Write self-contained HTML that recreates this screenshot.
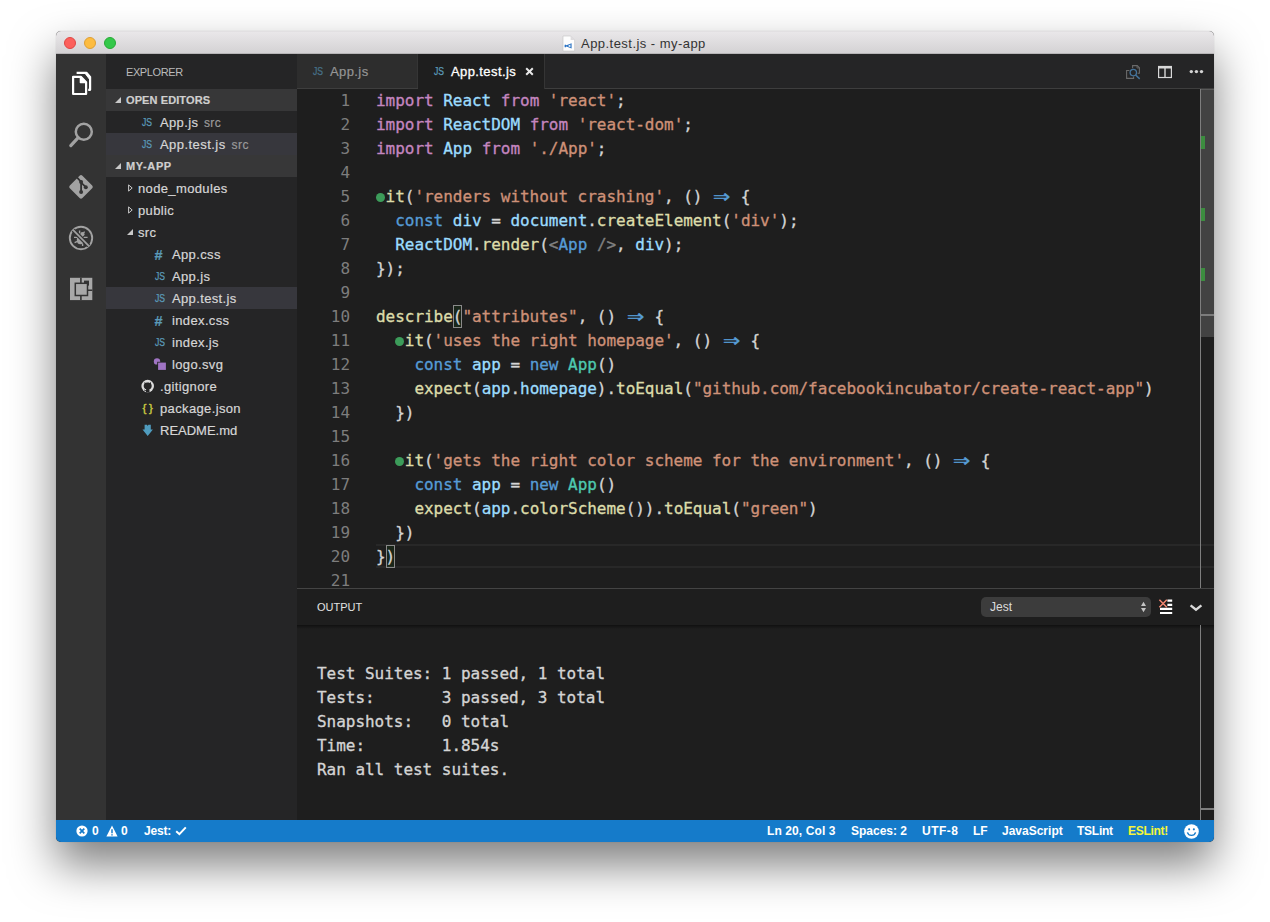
<!DOCTYPE html>
<html lang="en">
<head>
<meta charset="utf-8">
<title>App.test.js - my-app</title>
<style>
*{box-sizing:border-box;margin:0;padding:0}
html,body{width:1270px;height:922px;overflow:hidden;background:#fff}
body{font-family:"Liberation Sans",sans-serif;position:relative;-webkit-font-smoothing:antialiased}
.abs{position:absolute}
#win{position:absolute;left:56px;top:31px;width:1158px;height:811px;border-radius:5px;background:#1e1e1e;
  box-shadow:0 23px 45px rgba(0,0,0,.50),0 0 1px rgba(0,0,0,.3);}
#clip{position:absolute;inset:0;border-radius:5px;overflow:hidden}
#title{position:absolute;left:0;top:0;width:1158px;height:23px;background:linear-gradient(#e9e7e9,#d4d2d4);border-bottom:1px solid #b7b5b7;
  border-top:1px solid #e2e0e2}
.tl{position:absolute;top:5px;width:12px;height:12px;border-radius:50%}
#ttext{position:absolute;left:525px;top:4px;font-size:13px;color:#333333;line-height:15px;letter-spacing:.46px;white-space:nowrap}
#act{position:absolute;left:0;top:23px;width:50px;height:766px;background:#333333}
#side{position:absolute;left:50px;top:23px;width:191px;height:766px;background:#252526;color:#d6d6d6;font-size:13px}
#ed{position:absolute;left:241px;top:23px;width:917px;height:766px;background:#1e1e1e}
#status{position:absolute;left:0;top:789px;width:1158px;height:22px;background:#157bca;color:#fff;font-size:12px;font-weight:bold}
/* sidebar */
.row{position:absolute;left:0;width:191px;height:22px;line-height:22px;white-space:nowrap}
.hdr{background:#373738;font-weight:bold;font-size:11px;color:#cfcfcf}
.row.hdr .t{top:0;letter-spacing:.1px}
.sel{background:#37373d}
.row .t{position:absolute;top:1px;letter-spacing:.36px;-webkit-text-stroke:.2px}
.dim{color:#9a9a9a;font-size:12px;margin-left:-2px}
.ic{position:absolute}
.row .js{font-size:10px;color:#5b9ab8;letter-spacing:-.2px;transform:scaleX(.86);transform-origin:0 50%;top:1px;-webkit-text-stroke:.25px #5b9ab8}
.row .hash{font-size:14.5px;font-weight:bold;color:#5b9ab8;letter-spacing:0;top:1px}
.tw{position:absolute;width:0;height:0}
.tri-r{width:5px;height:8px}
/* editor */
.mono{font-family:"DejaVu Sans Mono","Liberation Mono",monospace;font-size:16px;-webkit-text-stroke:.32px;letter-spacing:-.033px}
.ln{position:absolute;left:0;width:53px;height:24px;line-height:24px;text-align:right;color:#7d7d7d;white-space:pre;-webkit-text-stroke:0}
.cl{position:absolute;left:79px;height:24px;line-height:24px;color:#d4d4d4;white-space:pre}
.k{color:#c586c0}.v{color:#9cdcfe}.s{color:#ce9178}.b{color:#569cd6}.f{color:#dcdcaa}.c{color:#4ec9b0}.g{color:#808080}
.dot{display:inline-block;width:9.6px;position:relative}
.dot i{position:absolute;left:0;top:-9.5px;width:9px;height:9px;border-radius:50%;background:#3c9c5a}
.ar{display:inline-block;width:19.2px;text-align:center;transform:scale(1.75,1.35);transform-origin:50% 56%}

#tabs{position:absolute;left:0;top:0;width:917px;height:35px;background:#252526;border-bottom:1px solid #3e3e3e}
.tab{position:absolute;top:0;height:34px;font-size:13px;line-height:35px;white-space:nowrap;letter-spacing:.4px}
.tjs{font-size:10px;color:#5b9ab8;letter-spacing:-.2px;transform:scaleX(.86);transform-origin:0 50%;-webkit-text-stroke:.25px}
#code{position:absolute;left:0;top:0;width:917px;height:534px;overflow:hidden}
#ruler{position:absolute;left:903px;top:35px;width:14px;height:499px}
.gm{left:1px;width:4px;height:13px;background:#3c8c3f}
.bm{outline:1px solid #8a8a8a;outline-offset:-1px;padding:2px 0 2px;background:rgba(0,100,0,.12)}
#panel{position:absolute;left:0;top:534px;width:917px;height:232px;background:#1e1e1e;border-top:1px solid #444444}
.st{top:0;line-height:22px;white-space:nowrap}
</style>
</head>
<body>
<div id="win"><div id="clip">
  <div id="title">
    <div class="tl" style="left:8px;background:#fc605c;border:.5px solid #df4744"></div>
    <div class="tl" style="left:28px;background:#fdbc40;border:.5px solid #de9f34"></div>
    <div class="tl" style="left:48px;background:#34c84a;border:.5px solid #27aa35"></div>
    <svg class="abs" style="left:506px;top:3px" width="14" height="17" viewBox="0 0 14 17"><path d="M1 1H8.6L12.6 5V16H1Z" fill="#fdfdfd" stroke="#c4c2c4" stroke-width=".6"/><path d="M8.6 1V5H12.6Z" fill="#dedcde"/><path d="M9.6 8.2V13.6L4.4 11.6L3.2 12.4L2.6 11.9V9.9L3.2 9.4L4.4 10.2ZM8.4 9.6L6 10.9L8.4 12.2Z" fill="#2a73c4" fill-rule="evenodd"/></svg>
    <div id="ttext">App.test.js - my-app</div>
  </div>
  <div id="act">
    <svg class="abs" style="left:0;top:0" width="50" height="300" viewBox="0 0 50 300" fill="none">
      <!-- explorer -->
      <g stroke="#ffffff" stroke-width="2.2" stroke-linejoin="round" stroke-linecap="butt">
        <path d="M17.1 22.8H24.8L30.1 28.2V40H17.1Z"/>
        <path d="M24.4 22.8V28.6H30.1Z" stroke-width="1.4" fill="#ffffff"/>
        <path d="M20.6 18.8H30.4L34.1 22.9V35.8H32.2"/>
        <path d="M30 18.8L34.1 23.2V26L28.6 18.8Z" stroke-width="1" fill="#ffffff"/>
      </g>
      <!-- search -->
      <g stroke="#a2a2a2">
        <circle cx="27.8" cy="77.7" r="8" stroke-width="2.5"/>
        <path d="M22.2 83.6L14.8 91.6" stroke-width="3.2" stroke-linecap="round"/>
      </g>
      <!-- git -->
      <g>
        <rect x="16.1" y="123.9" width="17.8" height="17.8" rx="2" transform="rotate(45 25 132.8)" fill="#a2a2a2"/>
        <g stroke="#333333" stroke-width="1.8" stroke-linecap="round">
          <path d="M21.4 123.9L25.1 127.8V137.9M25.1 128.6L29.8 133.2"/>
        </g>
        <circle cx="25.1" cy="127.9" r="2" fill="#333333"/>
        <circle cx="29.8" cy="133.3" r="2" fill="#333333"/>
        <circle cx="25.1" cy="138" r="2" fill="#333333"/>
      </g>
      <!-- debug -->
      <g stroke="#a2a2a2" stroke-width="1.6">
        <circle cx="25" cy="184" r="11.2" stroke-width="1.9"/>
        <ellipse cx="24.4" cy="185.8" rx="3.6" ry="4.5" fill="#a2a2a2" stroke="none"/>
        <circle cx="26.4" cy="180.2" r="2.1" fill="#a2a2a2" stroke="none"/>
        <path d="M18 183.4H21.4M18.6 188.6L21.4 187.4M28 183.4H31.6M27.6 187.6L31 189.2M26.6 189.4V192M23.6 176.6V179.6M28.6 177.6L27 179.6" stroke-width="1.4"/>
        <path d="M17.2 176.2L32.8 191.8" stroke="#333333" stroke-width="4.2"/>
        <path d="M17.2 176.2L32.8 191.8" stroke-width="1.7"/>
      </g>
      <!-- extensions -->
      <g>
        <rect x="14" y="223.8" width="22.3" height="22.3" fill="#a8a8a8"/>
        <path d="M24.9 223.8V246.1M24.9 236.2H36.3" stroke="#333333" stroke-width="1.6"/>
        <rect x="28" y="226.6" width="5" height="5" fill="#333333"/>
        <rect x="19.3" y="229.3" width="12.2" height="12.2" fill="#a8a8a8" stroke="#333333" stroke-width="1.5"/>
      </g>
    </svg>
  </div>
  <div id="side">
    <div class="abs" style="left:20px;top:11px;font-size:11px;line-height:14px;color:#bbbbbb;letter-spacing:-.4px">EXPLORER</div>
    <div class="row hdr" style="top:35px"><span class="tw" style="left:9px;top:8px;border-left:6px solid transparent;border-bottom:6px solid #c8c8c8"></span><span class="t" style="left:20px">OPEN EDITORS</span></div>
    <div class="row" style="top:57px"><span class="t js" style="left:36px">JS</span><span class="t" style="left:54px">App.js <span class="dim">&nbsp;src</span></span></div>
    <div class="row sel" style="top:79px"><span class="t js" style="left:36px">JS</span><span class="t" style="left:54px;letter-spacing:.45px">App.test.js <span class="dim">&nbsp;src</span></span></div>
    <div class="row hdr" style="top:101px"><span class="tw" style="left:9px;top:8px;border-left:6px solid transparent;border-bottom:6px solid #c8c8c8"></span><span class="t" style="left:20px;letter-spacing:.6px">MY-APP</span></div>
    <div class="row" style="top:123px"><svg class="tw tri-r" style="left:22px;top:7px" viewBox="0 0 5 8"><path d="M.6 .9L4.2 4L.6 7.1Z" fill="none" stroke="#c8c8c8" stroke-width="1"/></svg><span class="t" style="left:32px">node_modules</span></div>
    <div class="row" style="top:145px"><svg class="tw tri-r" style="left:22px;top:7px" viewBox="0 0 5 8"><path d="M.6 .9L4.2 4L.6 7.1Z" fill="none" stroke="#c8c8c8" stroke-width="1"/></svg><span class="t" style="left:32px">public</span></div>
    <div class="row" style="top:167px"><span class="tw" style="left:21px;top:8px;border-left:6px solid transparent;border-bottom:6px solid #c8c8c8"></span><span class="t" style="left:32px">src</span></div>
    <div class="row" style="top:189px"><span class="t hash" style="left:48.5px">#</span><span class="t" style="left:66px">App.css</span></div>
    <div class="row" style="top:211px"><span class="t js" style="left:49px">JS</span><span class="t" style="left:66px">App.js</span></div>
    <div class="row sel" style="top:233px"><span class="t js" style="left:49px">JS</span><span class="t" style="left:66px">App.test.js</span></div>
    <div class="row" style="top:255px"><span class="t hash" style="left:48.5px">#</span><span class="t" style="left:66px">index.css</span></div>
    <div class="row" style="top:277px"><span class="t js" style="left:49px">JS</span><span class="t" style="left:66px">index.js</span></div>
    <div class="row" style="top:299px"><svg class="abs" style="left:46px;top:4px" width="16" height="16" viewBox="0 0 16 16"><circle cx="5" cy="4.4" r="3.2" fill="#a074c4"/><rect x="5.2" y="4.8" width="9.6" height="9" fill="#252526"/><rect x="6.1" y="5.6" width="7.8" height="7.3" fill="#a074c4"/></svg><span class="t" style="left:66px">logo.svg</span></div>
    <div class="row" style="top:321px"><svg class="abs" style="left:34px;top:3px" width="16" height="16" viewBox="0 0 16 16"><circle cx="7.7" cy="8.1" r="6.3" fill="#dcdcdc"/><path d="M7.7 4.6C6.9 4.6 6.3 4.7 5.8 4.9L4.5 4.1L4.4 5.8C3.9 6.4 3.7 7.1 3.7 7.9C3.7 10 5.1 10.9 6.2 11.1L5.9 12.2C5.3 12.4 4.7 12.1 4.3 11.5L3.9 11.7C4.4 12.7 5.2 13.1 5.9 12.9V14.6H9.5V11.1C10.5 10.9 11.7 10 11.7 7.9C11.7 7.1 11.5 6.4 11 5.8L10.9 4.1L9.6 4.9C9.1 4.7 8.5 4.6 7.7 4.6Z" fill="#252526"/></svg><span class="t" style="left:54px">.gitignore</span></div>
    <div class="row" style="top:343px"><span class="abs" style="left:36.5px;top:0;font-size:11.5px;color:#cbcb41;letter-spacing:2.6px;-webkit-text-stroke:.4px #cbcb41">{}</span><span class="t" style="left:54px">package.json</span></div>
    <div class="row" style="top:365px"><svg class="abs" style="left:34px;top:4px" width="16" height="16" viewBox="0 0 16 16"><path d="M4.6 1.7H7L7.7 2.9L8.4 1.7H10.8V6.6H12.9L7.7 12.9L2.5 6.6H4.6Z" fill="#4f9cbe"/></svg><span class="t" style="left:54px;letter-spacing:0">README.md</span></div>
  </div>
  <div id="ed">
    <div id="tabs">
      <div class="tab" style="left:0;width:121px;background:#2d2d2d;border-right:1px solid #353535;color:#959595;-webkit-text-stroke:.2px"><span class="abs tjs" style="left:16px;color:#47728a">JS</span><span class="abs" style="left:33px">App.js</span></div>
      <div class="tab" style="left:121px;width:127px;background:#1e1e1e;height:35px;border-right:1px solid #353535;color:#ffffff;-webkit-text-stroke:.3px"><span class="abs tjs" style="left:16px">JS</span><span class="abs" style="left:33px">App.test.js</span>
        <svg class="abs" style="left:107px;top:13px" width="9" height="9" viewBox="0 0 9 9"><path d="M1.2 1.2L7.8 7.8M7.8 1.2L1.2 7.8" stroke="#e8e8e8" stroke-width="2"/></svg></div>
    <svg class="abs" style="left:826px;top:10px" width="84" height="16" viewBox="0 0 84 16" fill="none">
        <g stroke="#6a6a6a" stroke-width="1.1">
          <path d="M9.6 4.2V1.6H14.2L16.4 3.8V9.2H14.6"/>
          <path d="M14 1.6V4H16.4" stroke-width=".8"/>
          <path d="M6.4 6.5H3.6V14.4H10.6V12.6"/>
        </g>
        <circle cx="10.3" cy="8.6" r="3.2" stroke="#44739b" stroke-width="1.3"/>
        <path d="M12.6 11L16.7 14.9" stroke="#44739b" stroke-width="1.5"/>
        <rect x="35.6" y="2.5" width="12.8" height="11" stroke="#d8d8d8" stroke-width="1.2"/>
        <path d="M35 3.2H49" stroke="#d8d8d8" stroke-width="2.6"/>
        <path d="M42 3V13.5" stroke="#d8d8d8" stroke-width="1.4"/>
        <circle cx="68.3" cy="7.6" r="1.7" fill="#d4d4d4"/><circle cx="73.4" cy="7.6" r="1.7" fill="#d4d4d4"/><circle cx="78.5" cy="7.6" r="1.7" fill="#d4d4d4"/>
      </svg>
    </div>
    <div id="code">
      <div class="abs" style="left:79px;top:490px;width:838px;height:24px;border-top:2px solid #282828;border-bottom:2px solid #282828"></div>
      <div class="ln mono" style="top:35px">1</div><div class="cl mono" style="top:35px"><span class="k">import</span> <span class="v">React</span> <span class="k">from</span> <span class="s">'react'</span>;</div>
      <div class="ln mono" style="top:59px">2</div><div class="cl mono" style="top:59px"><span class="k">import</span> <span class="v">ReactDOM</span> <span class="k">from</span> <span class="s">'react-dom'</span>;</div>
      <div class="ln mono" style="top:83px">3</div><div class="cl mono" style="top:83px"><span class="k">import</span> <span class="v">App</span> <span class="k">from</span> <span class="s">'./App'</span>;</div>
      <div class="ln mono" style="top:107px">4</div><div class="cl mono" style="top:107px"></div>
      <div class="ln mono" style="top:131px">5</div><div class="cl mono" style="top:131px"><span class="dot"><i></i></span><span class="f">it</span>(<span class="s">'renders without crashing'</span>, () <span class="b ar">⇒</span> {</div>
      <div class="ln mono" style="top:155px">6</div><div class="cl mono" style="top:155px">  <span class="b">const</span> <span class="v">div</span> = <span class="v">document</span>.<span class="f">createElement</span>(<span class="s">'div'</span>);</div>
      <div class="ln mono" style="top:179px">7</div><div class="cl mono" style="top:179px">  <span class="v">ReactDOM</span>.<span class="f">render</span>(<span class="g">&lt;</span><span class="b">App</span> <span class="g">/&gt;</span>, <span class="v">div</span>);</div>
      <div class="ln mono" style="top:203px">8</div><div class="cl mono" style="top:203px">});</div>
      <div class="ln mono" style="top:227px">9</div><div class="cl mono" style="top:227px"></div>
      <div class="ln mono" style="top:251px">10</div><div class="cl mono" style="top:251px"><span class="f">describe</span><span class="bm">(</span><span class="s">"attributes"</span>, () <span class="b ar">⇒</span> {</div>
      <div class="ln mono" style="top:275px">11</div><div class="cl mono" style="top:275px">  <span class="dot"><i></i></span><span class="f">it</span>(<span class="s">'uses the right homepage'</span>, () <span class="b ar">⇒</span> {</div>
      <div class="ln mono" style="top:299px">12</div><div class="cl mono" style="top:299px">    <span class="b">const</span> <span class="v">app</span> = <span class="b">new</span> <span class="c">App</span>()</div>
      <div class="ln mono" style="top:323px">13</div><div class="cl mono" style="top:323px">    <span class="f">expect</span>(<span class="v">app</span>.<span class="v">homepage</span>).<span class="f">toEqual</span>(<span class="s">"github.com/facebookincubator/create-react-app"</span>)</div>
      <div class="ln mono" style="top:347px">14</div><div class="cl mono" style="top:347px">  })</div>
      <div class="ln mono" style="top:371px">15</div><div class="cl mono" style="top:371px"></div>
      <div class="ln mono" style="top:395px">16</div><div class="cl mono" style="top:395px">  <span class="dot"><i></i></span><span class="f">it</span>(<span class="s">'gets the right color scheme for the environment'</span>, () <span class="b ar">⇒</span> {</div>
      <div class="ln mono" style="top:419px">17</div><div class="cl mono" style="top:419px">    <span class="b">const</span> <span class="v">app</span> = <span class="b">new</span> <span class="c">App</span>()</div>
      <div class="ln mono" style="top:443px">18</div><div class="cl mono" style="top:443px">    <span class="f">expect</span>(<span class="v">app</span>.<span class="f">colorScheme</span>()).<span class="f">toEqual</span>(<span class="s">"green"</span>)</div>
      <div class="ln mono" style="top:467px">19</div><div class="cl mono" style="top:467px">  })</div>
      <div class="ln mono" style="top:491px">20</div><div class="cl mono" style="top:491px">}<span class="bm">)</span></div>
      <div class="ln mono" style="top:515px">21</div><div class="cl mono" style="top:515px"></div>
      <div id="ruler">
        <div class="abs" style="left:0;top:0;width:14px;height:248px;background:#424242"></div>
        <div class="abs" style="left:0;top:0;width:14px;height:1px;background:#5a5a5a"></div>
        <div class="abs" style="left:0;top:225px;width:14px;height:2px;background:#7c7c7c"></div>
        <div class="abs gm" style="top:47px"></div><div class="abs gm" style="top:119px"></div><div class="abs gm" style="top:179px"></div>
        <div class="abs" style="left:0;top:0;width:1px;height:499px;background:#7e7e7e"></div>
      </div>
    </div>
    <div id="panel">
      <div class="abs" style="left:20px;top:11px;font-size:11px;line-height:14px;color:#e2e2e2">OUTPUT</div>
      <div class="abs" style="left:684px;top:8px;width:170px;height:20px;border-radius:5px;background:#3c3c3c;color:#dcdcdc;font-size:12px;line-height:20px;padding-left:9px">Jest
        <svg class="abs" style="left:159px;top:4px" width="7" height="12" viewBox="0 0 7 12"><path d="M3.5 .8L6 4.9H1ZM3.5 11.2L6 7.1H1Z" fill="#c4c4c4"/></svg>
      </div>
      <svg class="abs" style="left:861px;top:10px" width="15" height="16" viewBox="0 0 15 16">
        <path d="M9.4 1.7H14.2M9.4 5.8H14.2M2 9.9H14.2M2 14H14.2" stroke="#ffffff" stroke-width="2.2"/>
        <path d="M1.4 .8L8.8 8.2M8.8 .8L1.4 8.2" stroke="#f48771" stroke-width="1.5"/>
      </svg>
      <svg class="abs" style="left:891px;top:14px" width="16" height="10" viewBox="0 0 16 10"><path d="M2.6 2.4L8 6.7L13.4 2.4" fill="none" stroke="#dadada" stroke-width="2.4" stroke-linecap="butt" stroke-linejoin="miter"/></svg>
      <div class="abs" style="left:0;top:36px;width:917px;height:4px;background:linear-gradient(rgba(0,0,0,.45),rgba(0,0,0,0))"></div>
      <div class="abs mono" style="left:20px;top:73px;line-height:24px;color:#d4d4d4;white-space:pre">Test Suites: 1 passed, 1 total
Tests:       3 passed, 3 total
Snapshots:   0 total
Time:        1.854s
Ran all test suites.</div>
      <div class="abs" style="left:903px;top:36px;width:1px;height:196px;background:#7e7e7e"></div>
      <div class="abs" style="left:903px;top:219px;width:14px;height:2px;background:#7c7c7c"></div>
    </div>
  </div>
  <div id="status">
    <svg class="abs" style="left:20px;top:5px" width="12" height="12" viewBox="0 0 12 12"><circle cx="6" cy="6" r="5.6" fill="#fff"/><path d="M3.7 3.7L8.3 8.3M8.3 3.7L3.7 8.3" stroke="#157bca" stroke-width="1.7"/></svg>
    <span class="abs st" style="left:36px">0</span>
    <svg class="abs" style="left:50px;top:5px" width="12" height="12" viewBox="0 0 12 12"><path d="M6 .6L11.6 11.4H.4Z" fill="#fff"/><path d="M6 4.2V8.2M6 9.2V10.6" stroke="#157bca" stroke-width="1.5"/></svg>
    <span class="abs st" style="left:65px">0</span>
    <span class="abs st" style="left:88px;letter-spacing:-.2px">Jest:</span>
    <svg class="abs" style="left:119px;top:6px" width="12" height="10" viewBox="0 0 12 10"><path d="M1.2 5.2L4.4 8.2L10.8 1.4" fill="none" stroke="#fff" stroke-width="2"/></svg>
    <span class="abs st" style="left:711px;letter-spacing:.1px">Ln 20, Col 3</span>
    <span class="abs st" style="left:795px">Spaces: 2</span>
    <span class="abs st" style="left:866px;letter-spacing:.5px">UTF-8</span>
    <span class="abs st" style="left:917px">LF</span>
    <span class="abs st" style="left:946px">JavaScript</span>
    <span class="abs st" style="left:1021px;letter-spacing:-.25px">TSLint</span>
    <span class="abs st" style="left:1072px;color:#f5f53a;letter-spacing:-.3px">ESLint!</span>
    <svg class="abs" style="left:1127.5px;top:3.5px" width="15" height="15" viewBox="0 0 14 14"><circle cx="7" cy="7" r="6.8" fill="#fff"/><circle cx="4.8" cy="5" r="1" fill="#157bca"/><circle cx="9.2" cy="5" r="1" fill="#157bca"/><path d="M3.2 7.8C4.4 11.6 9.6 11.6 10.8 7.8" fill="none" stroke="#157bca" stroke-width="1.3"/></svg>
  </div>
</div></div>
</body>
</html>
